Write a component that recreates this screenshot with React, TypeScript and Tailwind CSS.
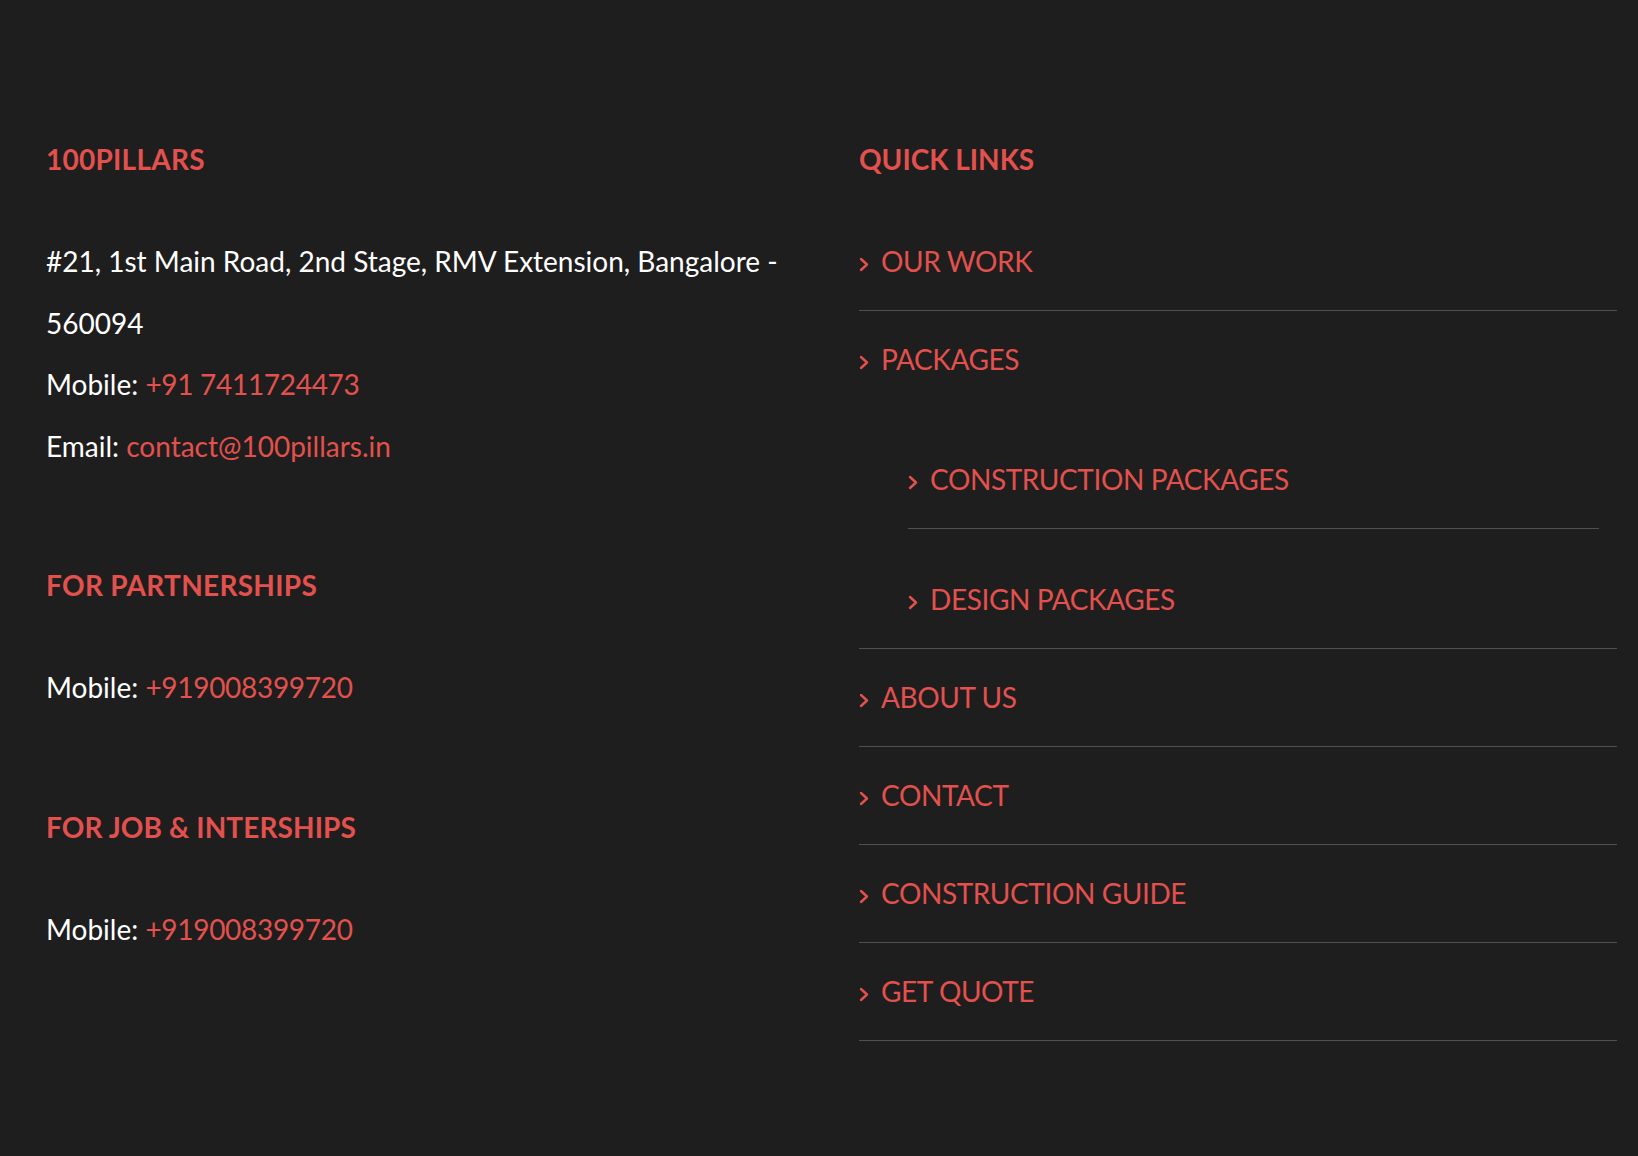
import React from "react";

const Chevron = () => (
  <svg width="10" height="15" viewBox="0 0 10 15" className="mt-[6px] mr-[12px] shrink-0" fill="none">
    <polyline points="2,2 8,7.5 2,13" stroke="#e2514d" strokeWidth="2.4" strokeLinecap="round" strokeLinejoin="round" />
  </svg>
);

const Row = ({ label }: { label: string }) => (
  <div className="flex items-center leading-[42px] py-[27px] pb-[28px]">
    <Chevron />
    <span className="text-[#e2514d] tracking-[-0.4px]">{label}</span>
  </div>
);

export default function App() {
  const font = { fontFamily: 'Lato, "Noto Sans", sans-serif' };
  return (
    <div className="min-h-[1156px] w-full bg-[#1e1e1e] text-[28px] text-white" style={font}>
      <div className="flex pl-[46px] pt-[142px] pb-[116px]">
        <div className="w-[813px] shrink-0">
          <h3 className="font-bold text-[#e2514d] leading-[34px] tracking-[0.25px]">100PILLARS</h3>
          <div className="mt-[55px] leading-[61.5px]">
            <p>
              #21, 1st Main Road, 2nd Stage, RMV Extension, Bangalore -<br />560094
            </p>
            <p>
              Mobile: <span className="text-[#e2514d] tracking-[-0.3px]">+91 7411724473</span>
            </p>
            <p>
              Email: <span className="text-[#e2514d]">contact@100pillars.in</span>
            </p>
          </div>
          <h3 className="mt-[91px] font-bold text-[#e2514d] leading-[34px] tracking-[0.3px]">FOR PARTNERSHIPS</h3>
          <p className="mt-[55px] leading-[61.5px]">
            Mobile: <span className="text-[#e2514d] tracking-[-0.3px]">+919008399720</span>
          </p>
          <h3 className="mt-[91px] font-bold text-[#e2514d] leading-[34px] tracking-[0.1px]">FOR JOB &amp; INTERSHIPS</h3>
          <p className="mt-[55px] leading-[61.5px]">
            Mobile: <span className="text-[#e2514d] tracking-[-0.3px]">+919008399720</span>
          </p>
        </div>
        <div className="w-[758px] shrink-0">
          <h3 className="font-bold text-[#e2514d] leading-[34px]">QUICK LINKS</h3>
          <ul className="mt-[37px]">
            <li className="border-b border-[#505050]">
              <Row label="OUR WORK" />
            </li>
            <li className="border-b border-[#505050]">
              <Row label="PACKAGES" />
              <ul className="ml-[49px] mr-[18px]">
                <li className="mt-[23px] border-b border-[#505050]">
                  <Row label="CONSTRUCTION PACKAGES" />
                </li>
                <li className="mt-[22px]">
                  <Row label="DESIGN PACKAGES" />
                </li>
              </ul>
            </li>
            <li className="border-b border-[#505050]">
              <Row label="ABOUT US" />
            </li>
            <li className="border-b border-[#505050]">
              <Row label="CONTACT" />
            </li>
            <li className="border-b border-[#505050]">
              <Row label="CONSTRUCTION GUIDE" />
            </li>
            <li className="border-b border-[#505050]">
              <Row label="GET QUOTE" />
            </li>
          </ul>
        </div>
      </div>
    </div>
  );
}
